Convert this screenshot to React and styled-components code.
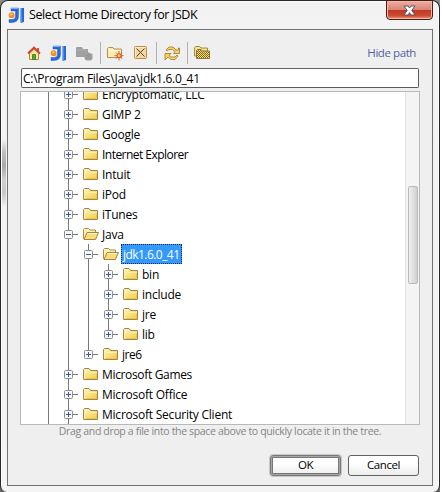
import React from "react";
import styled, { createGlobalStyle, css } from "styled-components";

const Global = createGlobalStyle`
  * { box-sizing: border-box; }
  body { margin: 0; background: #fff; overflow: hidden; font: 12px/20px "Open Sans", "Noto Sans", sans-serif; color: #000; }
  svg { display: block; flex: none; }
`;
const Backdrop = styled.div`
  width: 440px; height: 492px; background: linear-gradient(#8b8d8b, #636466);
`;
const Dialog = styled.div`
  width: 440px; height: 492px; display: flex; flex-direction: column;
  padding: 0 6px 6px; border: 1px solid #29292b; border-bottom: 0; border-radius: 8px 8px 7px 7px;
  background:
    linear-gradient(transparent, #bdbdbd 20%, #a9a9a9 40%, #d0d0d0 60%, #c8c8c8 80%, transparent) 1px 138px / 4px 68px no-repeat,
    linear-gradient(#fff 0, #f1f1f1 2px, #f3f3f3 28px, #f4f4f4 100%);
  box-shadow: inset 1px 0 #fff, inset -1px 0 #fff;
`;
const TitleBar = styled.header`
  height: 28px; flex: none; display: flex; align-items: flex-start;
`;
const TitleIcon = styled.span` padding: 6px 0 0 1px; width: 22px; `;
const Title = styled.h1`
  margin: 4px 0 0; font-size: 12.5px; line-height: 20px; font-weight: 400; flex: 1; white-space: nowrap;
  letter-spacing: -0.4px;
`;
const CloseButton = styled.button`
  width: 47px; height: 20px; padding: 0; margin: -1px 0 0 0; display: flex; align-items: center; justify-content: center;
  border: 1px solid #4b1a17; border-radius: 0 0 4px 4px;
  background: linear-gradient(#ebb0a4 0, #db8475 48%, #bd3923 50%, #c94a2e 80%, #e69476 100%);
  box-shadow: inset 0 0 0 1px #f0b9aa;
`;
const Body = styled.main`
  flex: 1; min-height: 0; display: flex; flex-direction: column; border: 1px solid #707274; background: #efefef;
  padding: 0 12px 0 12px;
`;
const Toolbar = styled.div`
  height: 38px; flex: none; display: flex; align-items: center; padding: 8px 4px 0 7px;
`;
const Tool = styled.span` width: ${p => p.$w}px; display: flex; `;
const Divider = styled.i` width: 1px; height: 22px; background: #b2b2b2; margin-right: ${p => p.$gap}px; `;
const PathLink = styled.a` margin-left: auto; color: #535fa4; font-size: 11.5px; line-height: 18px; padding-bottom: 1px; letter-spacing: -0.42px; `;
const PathInput = styled.div`
  height: 20px; flex: none; margin: 0 1px 3px; padding: 0 1px; border: 1px solid #5a5c5e; border-top-color: #606264;
  border-radius: 2px; background: #fff; line-height: 19px; letter-spacing: -0.26px; white-space: nowrap;
`;
const TreePanel = styled.div`
  height: 334px; flex: none; display: flex; border: 1px solid #b9b9b9; background: #fff; overflow: hidden;
`;
const Tree = styled.div` flex: 1; padding-left: 17px; margin-top: -8px; `;
const Row = styled.div` height: 20px; display: flex; align-items: center; white-space: nowrap; `;
const line = "linear-gradient(#77797b, #77797b)";
const Guide = styled.i`
  width: 20px; height: 20px; flex: none;
  background: ${line} 10px 0 / 1px 100% no-repeat;
`;
const Branch = styled.span`
  width: 20px; height: 20px; flex: none; margin-right: 5px; padding: 6px 0 0 6px;
  background: ${line} 10px 0 / 1px ${p => (p.$last ? "10px" : "20px")} no-repeat, ${line} 15px 10px / 5px 1px no-repeat;
`;
const Label = styled.span`
  margin-left: 2px; padding: 0 1px; height: 20px; line-height: 22px; letter-spacing: ${p => p.$ls ?? -0.23}px;
  ${p => p.$selected && css`color: #fff; background: #3399ff; outline: 1px dotted #152a40; outline-offset: -1px; width: 61px; padding-left: 2px;`}
`;
const ScrollTrack = styled.div`
  width: 14px; flex: none; border-left: 1px solid #e3e3e3; background: #f4f4f4; padding: 94px 1px 0;
`;
const Thumb = styled.div`
  width: 10px; height: 98px; margin-left: 1px; border: 1px solid #bbb; border-radius: 2px; background: linear-gradient(90deg, #efefef, #d0d0d0);
`;
const Hint = styled.p`
  margin: -1px 0 0; height: 15px; line-height: 15px; color: #858585; font-size: 10.5px; text-align: center; white-space: nowrap;
  letter-spacing: -0.34px;
`;
const Actions = styled.footer` display: flex; justify-content: flex-end; gap: 7px; margin: 16px 1px 0 0; `;
const Button = styled.button`
  width: 71px; height: 21px; padding: 0 0 2px; border: 1px solid #606264; border-radius: 3px; color: #000;
  font: 11.5px/17px "Open Sans", "Noto Sans", sans-serif; letter-spacing: -0.45px;
  background: linear-gradient(#fff, #fff 40%, #ececec);
  ${p => p.$primary && css`border-color: #77797b; box-shadow: inset 0 0 0 1px #a5a7a9, inset 0 0 0 2px #777, 0 0 0 1px #c8c8c8;`}
`;

const Logo = () => (
  <svg width="17" height="17" viewBox="0 0 17 17">
    <path d="M3 1H10.5V9Q10.5 15.5 4 15.5H1V12.5H4Q7.5 12.5 7.5 9V4H3Z" fill="#2868d8" stroke="#174fb5" strokeWidth=".4" />
    <path d="M3 1.5H10" stroke="#77adff" />
    <path d="M12.5 1H16V15L12.5 16Z" fill="#2868df" /><path d="M13 1V15" stroke="#79adff" />
    <circle cx="3.6" cy="8.2" r="2.9" fill="#f38a22" /><circle cx="3.3" cy="7.4" r="1.2" fill="#ffc276" />
  </svg>
);
const Folder = () => (
  <svg width="16" height="14" viewBox="0 0 16 14">
    <defs>
      <linearGradient id="folderFill" x1="0" y1="0" x2="1" y2="1"><stop stopColor="#fff3b8" /><stop offset="1" stopColor="#f3cd45" /></linearGradient>
    </defs>
    <path d="M.5 12.5V2.5L1.5 1.5H6L7.5 3.5H14.5V12.5Z" fill="url(#folderFill)" stroke="#a08451" />
    <path d="M1.5 3.5H6" stroke="#fff4c5" /><path d="M1.5 11.5V5.5H13.5" fill="none" stroke="#fff0ae" />
    <path d="M3 11.5H13.5V7" fill="none" stroke="#f0c53c" />
  </svg>
);
const OpenFolder = () => (
  <svg width="16" height="14" viewBox="0 0 16 14">
    <path d="M.5 11.5V2.5L1.5 1.5H5.5L7 3H12.5V11.5Z" fill="#fff0ae" stroke="#a68a55" />
    <path d="M1 12.5L4 5.5H15.5L12.5 12.5Z" fill="#f8dc77" stroke="#a68544" />
    <path d="M4.8 6.5H14" stroke="#fff8ce" />
  </svg>
);
const Expander = ({ open }) => (
  <svg width="9" height="9" viewBox="0 0 9 9">
    <rect x=".5" y=".5" width="8" height="8" rx="1" fill="#f6f6f4" stroke="#8b8d90" />
    <path d={open ? "M2 4.5H7" : "M2 4.5H7M4.5 2V7"} stroke="#3856ac" />
  </svg>
);
const Home = () => (
  <svg width="14" height="15" viewBox="0 0 14 15">
    <path d="M2.5 7V13.5H11.5V7L7 3Z" fill="#ffe78c" stroke="#b1884b" />
    <path d="M10 2H12V5H10Z" fill="#a66a42" />
    <path d="M1 7.5L7 1.5L13 7.5" fill="none" stroke="#dd3937" strokeWidth="1.8" />
    <path d="M5.5 8.5H8.5V13.5H5.5Z" fill="#45b33c" stroke="#4d8031" />
  </svg>
);
const ProjectFolder = () => (
  <svg width="17" height="15" viewBox="0 0 17 15">
    <path d="M0 2Q0 1 1 1H6L7 3H12V11H0Z" fill="#a0a0a0" /><path d="M1 4H11" stroke="#b1b1b1" />
    <path d="M9 8H11V7H14V8H16V13L15 14H10L9 13Z" fill="#999" stroke="#a6a6a6" />
  </svg>
);
const NewFolder = () => (
  <svg width="17" height="15" viewBox="0 0 17 15">
    <path d="M.5 11.5V2.5L1.5 1.5H6L7 3H14.5V11.5Z" fill="#faeeb0" stroke="#b08f52" />
    <path d="M2 4.5H14" stroke="#fffbe0" />
    <path d="M12 5V14.5M7.5 9.7H16.5M9 6.7L15 12.7M15 6.7L9 12.7" stroke="#ee5338" />
    <circle cx="12" cy="9.7" r="2" fill="#ffd16a" stroke="#e34a2a" />
  </svg>
);
const Delete = () => (
  <svg width="14" height="14" viewBox="0 0 14 14">
    <rect x=".5" y=".5" width="12" height="12" rx="1" fill="#f4d69d" stroke="#bd8c4c" />
    <path d="M1.5 11.5V1.5H11.5" stroke="#ffedc6" fill="none" /><path d="M2.5 2.5L10.5 10.5M10.5 2.5L2.5 10.5" stroke="#434b53" />
  </svg>
);
const Refresh = () => (
  <svg width="16" height="15" viewBox="0 0 16 15">
    <g fill="#f8d35d" stroke="#ad8233" strokeWidth=".9">
      <path d="M2 4L5 1H9L12 4H14.5V2L15.5 2V7.5H9.5L11 5.5L8.5 3.5H5L3 5Z" />
      <path d="M14 10L11 13.5H7L4 11L1 14V7.5H7L5 9.5L7.5 11H11L13 9Z" />
    </g>
  </svg>
);
const HiddenFolders = () => (
  <svg width="17" height="14" viewBox="0 0 17 14">
    <defs><pattern id="check" width="2" height="2" patternUnits="userSpaceOnUse"><rect width="2" height="2" fill="#f9dc68" /><path d="M0 0H1V1H0ZM1 1H2V2H1Z" fill="#7c692c" /></pattern></defs>
    <path d="M.5 10V1.5L1.5 .5H5.5L7 2H13.5V10Z" fill="#f5e18c" stroke="#a58b51" />
    <path d="M2.5 12.5V4.5L3.5 3.5H7L8.5 5H15.5V12.5Z" fill="url(#check)" stroke="#927538" />
  </svg>
);
const CloseMark = () => (
  <svg width="13" height="11" viewBox="0 0 13 11">
    <path d="M1 1H5L6.5 3L8 1H12L8.8 5.4L12 10H8L6.5 7.7L5 10H1L4.2 5.4Z" fill="#fff" stroke="#52576b" />
  </svg>
);

const rows = [
  { name: "Encryptomatic, LLC" }, { name: "GIMP 2" }, { name: "Google" }, { name: "Internet Explorer", ls: -0.53 },
  { name: "Intuit" }, { name: "iPod" }, { name: "iTunes" }, { name: "Java", open: true },
  { name: "jdk1.6.0_41", depth: 1, open: true, selected: true, ls: -0.55 },
  { name: "bin", depth: 2 }, { name: "include", depth: 2 }, { name: "jre", depth: 2 }, { name: "lib", depth: 2, last: true },
  { name: "jre6", depth: 1, last: true, ls: -0.5 }, { name: "Microsoft Games", ls: -0.34 }, { name: "Microsoft Office" }, { name: "Microsoft Security Client" },
];

const TreeRow = ({ name, depth = 0, open, selected, last, ls }) => (
  <Row>
    {Array.from({ length: depth + 1 }, (_, i) => <Guide key={i} />)}
    <Branch $last={last}><Expander open={open} /></Branch>
    {open ? <OpenFolder /> : <Folder />}
    <Label $selected={selected} $ls={ls}>{name}</Label>
  </Row>
);

export default function App() {
  return (
    <Backdrop>
      <Global />
      <Dialog>
        <TitleBar>
          <TitleIcon><Logo /></TitleIcon>
          <Title>Select Home Directory for JSDK</Title>
          <CloseButton aria-label="Close"><CloseMark /></CloseButton>
        </TitleBar>
        <Body>
          <Toolbar>
            <Tool $w={23}><Home /></Tool>
            <Tool $w={26}><Logo /></Tool>
            <Tool $w={24}><ProjectFolder /></Tool>
            <Divider $gap={6} />
            <Tool $w={27}><NewFolder /></Tool>
            <Tool $w={22}><Delete /></Tool>
            <Divider $gap={7} />
            <Tool $w={23}><Refresh /></Tool>
            <Divider $gap={6} />
            <Tool $w={17}><HiddenFolders /></Tool>
            <PathLink>Hide path</PathLink>
          </Toolbar>
          <PathInput>C:\Program Files\Java\jdk1.6.0_41</PathInput>
          <TreePanel>
            <Tree>{rows.map(r => <TreeRow key={r.name} {...r} />)}</Tree>
            <ScrollTrack><Thumb /></ScrollTrack>
          </TreePanel>
          <Hint>Drag and drop a file into the space above to quickly locate it in the tree.</Hint>
          <Actions><Button $primary>OK</Button><Button>Cancel</Button></Actions>
        </Body>
      </Dialog>
    </Backdrop>
  );
}
